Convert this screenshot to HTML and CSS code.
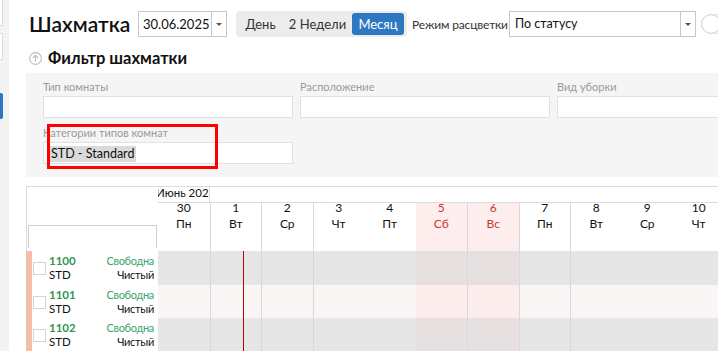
FILE: index.html
```html
<!DOCTYPE html>
<html lang="ru">
<head>
<meta charset="utf-8">
<title>Шахматка</title>
<link rel="stylesheet" href="styles.css">
</head>
<body>
<div class="app">
  <aside class="sidebar">
    <div class="sb-box sb-box1"></div>
    <div class="sb-box sb-box2"></div>
    <div class="sb-active"></div>
  </aside>
  <main class="main">
    <div class="toolbar">
      <h1 class="title">Шахматка</h1>
      <div class="combo date"><span class="combo-text">30.06.2025</span><span class="combo-btn"><i class="caret"></i></span></div>
      <div class="seg"><span class="seg-item s1">День</span><span class="seg-item s2">2 Недели</span><span class="seg-item s3 active">Месяц</span></div>
      <span class="mode-label">Режим расцветки</span>
      <div class="combo mode"><span class="combo-text">По статусу</span><span class="combo-btn"><i class="caret"></i></span></div>
      <div class="toggle"><span class="knob"></span></div>
    </div>

    <div class="filter-head">
      <svg class="fh-icon" width="13" height="13" viewBox="0 0 13 13"><circle cx="6.5" cy="6.5" r="5.9" fill="none" stroke="#bdbdbd" stroke-width="1.1"/><path d="M6.5 3.4V9.8M3.9 6L6.5 3.4L9.1 6" fill="none" stroke="#bdbdbd" stroke-width="1.1"/></svg>
      <span>Фильтр шахматки</span>
    </div>

    <div class="filter-panel">
      <div class="field"><label class="f-label">Тип комнаты</label><div class="f-input"></div></div>
      <div class="field"><label class="f-label">Расположение</label><div class="f-input"></div></div>
      <div class="field"><label class="f-label">Вид уборки</label><div class="f-input"></div></div>
      <div class="field field-cat"><label class="f-label">Категории типов комнат</label><div class="f-input"><span class="tag">STD - Standard</span></div><div class="highlight"></div></div>
    </div>

    <div class="sched">
      <div class="shead">
        <div class="corner"><div class="corner-box"></div></div>
        <div class="shead-right">
          <div class="months"><div class="month">Июнь 2025</div><div class="month-rest"></div></div>
          <div class="days">
            <div class="day"><div class="dnum">30</div><div>Пн</div></div>
            <div class="day bl"><div class="dnum">1</div><div>Вт</div></div>
            <div class="day bl"><div class="dnum">2</div><div>Ср</div></div>
            <div class="day bl"><div class="dnum">3</div><div>Чт</div></div>
            <div class="day"><div class="dnum">4</div><div>Пт</div></div>
            <div class="day we"><div class="dnum">5</div><div>Сб</div></div>
            <div class="day we bl"><div class="dnum">6</div><div>Вс</div></div>
            <div class="day bl"><div class="dnum">7</div><div>Пн</div></div>
            <div class="day bl"><div class="dnum">8</div><div>Вт</div></div>
            <div class="day"><div class="dnum">9</div><div>Ср</div></div>
            <div class="day"><div class="dnum">10</div><div>Чт</div></div>
          </div>
        </div>
      </div>

      <div class="srow gray">
        <div class="room"><span class="chk"></span><div class="rinfo"><div class="rnum">1100</div><div>STD</div></div><div class="rstat"><div class="free">Свободна</div><div>Чистый</div></div></div>
        <div class="cell"></div><div class="cell bl today"></div><div class="cell bl"></div><div class="cell bl"></div><div class="cell"></div><div class="cell we"></div><div class="cell we bl"></div><div class="cell bl"></div><div class="cell bl"></div><div class="cell"></div><div class="cell"></div>
      </div>
      <div class="srow light">
        <div class="room"><span class="chk"></span><div class="rinfo"><div class="rnum">1101</div><div>STD</div></div><div class="rstat"><div class="free">Свободна</div><div>Чистый</div></div></div>
        <div class="cell"></div><div class="cell bl today"></div><div class="cell bl"></div><div class="cell bl"></div><div class="cell"></div><div class="cell we"></div><div class="cell we bl"></div><div class="cell bl"></div><div class="cell bl"></div><div class="cell"></div><div class="cell"></div>
      </div>
      <div class="srow gray">
        <div class="room"><span class="chk"></span><div class="rinfo"><div class="rnum">1102</div><div>STD</div></div><div class="rstat"><div class="free">Свободна</div><div>Чистый</div></div></div>
        <div class="cell"></div><div class="cell bl today"></div><div class="cell bl"></div><div class="cell bl"></div><div class="cell"></div><div class="cell we"></div><div class="cell we bl"></div><div class="cell bl"></div><div class="cell bl"></div><div class="cell"></div><div class="cell"></div>
      </div>
    </div>
  </main>
</div>
</body>
</html>
```

FILE: styles.css
```css
html, body {
  margin: 0;
  height: 100%;
  overflow: hidden;
  background: #fff;
}
body {
  font-family: "Lato", "Open Sans", sans-serif;
  color: #222;
  font-size: 13px;
}
.app {
  display: flex;
  height: 351px;
  overflow: hidden;
}

/* sidebar */
.sidebar {
  width: 9px;
  flex: none;
  background: #f3f3f3;
}
.sb-box {
  width: 2px;
  height: 25px;
  background: #fff;
  border: 1px solid #dcdcdc;
  border-left: none;
}
.sb-box1 { margin-top: -1px; }
.sb-box2 { margin-top: 7px; }
.sb-active {
  margin-top: 33px;
  width: 3px;
  height: 26px;
  background: #2e78c2;
  border-radius: 0 2px 2px 0;
}

.main {
  flex: 1;
  min-width: 0;
  padding: 11px 0 0 17px;
}

/* toolbar */
.toolbar {
  display: flex;
  align-items: center;
  height: 26px;
  white-space: nowrap;
}
.title {
  margin: 0;
  padding-left: 3px;
  width: 112px;
  flex: none;
  box-sizing: border-box;
  font-size: 21px;
  font-weight: 600;
  line-height: 26px;
  color: #111;
}
.combo {
  display: flex;
  flex: none;
  height: 26px;
  box-sizing: border-box;
  border: 1px solid #c8c8c8;
  background: #fff;
}
.combo-text {
  flex: 1;
  line-height: 24px;
  padding-left: 4px;
  font-size: 13px;
  color: #111;
}
.combo-btn {
  width: 14px;
  border-left: 1px solid #c8c8c8;
  display: flex;
  align-items: center;
  justify-content: center;
}
.caret {
  width: 0;
  height: 0;
  border-left: 3px solid transparent;
  border-right: 3px solid transparent;
  border-top: 3px solid #555;
}
.date { width: 89px; }
.mode { width: 187px; margin-left: 3px; }
.mode .combo-text { padding-left: 5px; font-size: 12.5px; }

.seg {
  display: flex;
  flex: none;
  margin-left: 9px;
  padding: 2px 3px 2px 2px;
  background: #ececec;
  border-radius: 4px;
}
.seg-item {
  height: 22px;
  line-height: 22px;
  font-size: 13px;
  color: #333;
  text-align: center;
  border-radius: 3px;
}
.s1 { width: 45px; }
.s2 { width: 69px; }
.s3 { width: 52px; }
.seg-item.active {
  background: #2e78c2;
  color: #fff;
}
.mode-label {
  flex: none;
  width: 94px;
  margin-left: 5px;
  font-size: 12px;
  letter-spacing: -0.15px;
  color: #333;
}
.toggle {
  flex: none;
  margin-left: 5px;
  width: 40px;
  height: 20px;
  box-sizing: border-box;
  border: 1px solid #e2e2e2;
  border-radius: 10px;
  background: #f1f1f1;
  display: flex;
  align-items: center;
}
.knob {
  width: 18px;
  height: 18px;
  border-radius: 50%;
  background: #fff;
  box-shadow: 0 0 1px rgba(0,0,0,0.35);
}

/* filter heading */
.filter-head {
  display: flex;
  align-items: center;
  gap: 6px;
  height: 20px;
  margin: 11px 0 5px 3px;
  font-size: 16.5px;
  font-weight: 700;
  color: #111;
}
.fh-icon { flex: none; }

/* filter panel */
.filter-panel {
  background: #f5f5f5;
  padding: 7px 0 13px 17px;
  display: grid;
  grid-template-columns: repeat(3, 250px);
  column-gap: 7px;
  row-gap: 8px;
}
.field { position: relative; }
.f-label {
  display: block;
  font-size: 11px;
  line-height: 14px;
  color: #9a9a9a;
  margin-bottom: 2px;
  white-space: nowrap;
}
.f-input {
  height: 22px;
  box-sizing: border-box;
  border: 1px solid #e1e1e1;
  background: #fff;
}
.tag {
  display: inline-block;
  margin: 3px 0 0 5px;
  padding: 0 2px 0 2px;
  height: 16px;
  line-height: 16px;
  background: #dadada;
  font-size: 12.5px;
  color: #111;
}
.highlight {
  position: absolute;
  left: 4px;
  top: -2px;
  width: 171px;
  height: 45px;
  box-sizing: border-box;
  border: 3px solid #f00;
}

/* schedule */
.sched {
  margin-top: 9px;
  border-top: 1px solid #dcdcdc;
}
.shead { display: flex; }
.corner {
  width: 132px;
  flex: none;
  height: 64px;
  box-sizing: border-box;
  border-left: 1px solid #dcdcdc;
  padding: 38px 0 0 1px;
  background: #fff;
}
.corner-box {
  width: 129px;
  height: 23px;
  box-sizing: border-box;
  border: 1px solid #cfcfcf;
  border-bottom: none;
}
.shead-right { flex: none; }
.months {
  display: flex;
  height: 16px;
}
.month {
  width: 52px;
  box-sizing: border-box;
  border-right: 1px solid #dcdcdc;
  border-bottom: 1px solid #dcdcdc;
  overflow: hidden;
  white-space: nowrap;
  font-size: 11.5px;
  line-height: 11px;
  text-indent: -2px;
  color: #111;
}
.month-rest {
  width: 515px;
  border-bottom: 1px solid #dcdcdc;
}
.days {
  display: flex;
  height: 48px;
}
.day, .cell {
  width: 51.5px;
  flex: none;
  box-sizing: border-box;
}
.day {
  text-align: center;
  font-size: 12px;
  line-height: 16px;
  color: #111;
}
.dnum { margin-top: -3px; }
.day.we {
  background: #fdeded;
  color: #cc3636;
}
.bl { border-left: 1px solid #d8d8d8; }

.srow {
  display: flex;
  height: 33.5px;
}
.room {
  width: 132px;
  flex: none;
  box-sizing: border-box;
  border-left: 6px solid #f4bea6;
  background: #fff;
  display: flex;
  align-items: flex-start;
  padding: 3px 4px 0 1px;
  font-size: 11.5px;
  line-height: 14px;
  color: #111;
}
.chk {
  flex: none;
  width: 13px;
  height: 13px;
  margin-top: 8px;
  box-sizing: border-box;
  border: 1px solid #d4d4d4;
  background: #fff;
}
.rinfo { margin-left: 3px; }
.rnum {
  font-weight: 700;
  color: #2f9650;
}
.rstat {
  margin-left: auto;
  text-align: right;
  font-size: 11px;
  letter-spacing: -0.3px;
}
.free { color: #3aa56a; }

.srow.gray .cell { background: #e6e6e6; }
.srow.light .cell { background: #f9f6f5; }
.srow.gray .cell.we { background: #e6e0e0; }
.srow.light .cell.we { background: #fcecec; }
.cell.today { position: relative; }
.cell.today::after {
  content: "";
  position: absolute;
  left: 32px;
  top: 0;
  bottom: 0;
  width: 1.5px;
  background: #c80000;
}
```
